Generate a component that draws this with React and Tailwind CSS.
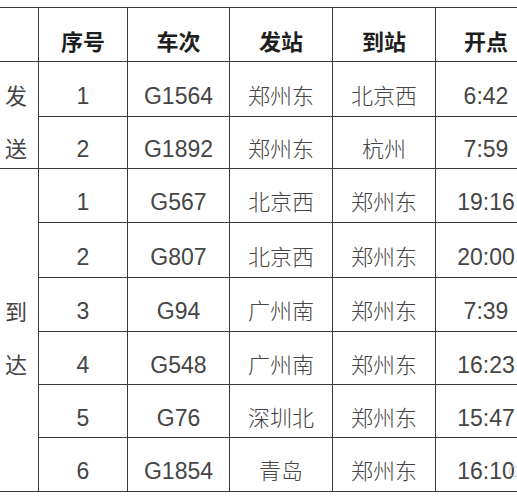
import React from "react";

const send = [
  ["1", "G1564", "郑州东", "北京西", "6:42"],
  ["2", "G1892", "郑州东", "杭州", "7:59"],
];

const arrive = [
  ["1", "G567", "北京西", "郑州东", "19:16"],
  ["2", "G807", "北京西", "郑州东", "20:00"],
  ["3", "G94", "广州南", "郑州东", "7:39"],
  ["4", "G548", "广州南", "郑州东", "16:23"],
  ["5", "G76", "深圳北", "郑州东", "15:47"],
  ["6", "G1854", "青岛", "郑州东", "16:10"],
];

const cn = { fontFamily: '"Noto Sans CJK SC", "Liberation Sans", sans-serif' };
const num = { fontFamily: '"Liberation Sans", Arial, "Noto Sans CJK SC", sans-serif' };

const Cell = ({ children, chinese }) => (
  <div
    className={`bg-white flex items-center justify-center text-[#454545] ${
      chinese ? "pt-[10px] text-[22px] font-light" : "pt-[14px] text-[23px]"
    }`}
    style={chinese ? cn : num}
  >
    {children}
  </div>
);

const SideChar = ({ h, children }) => (
  <div className={`${h} flex items-center justify-center pt-[10px] pr-[6px] text-[22px] text-[#444]`} style={cn}>
    {children}
  </div>
);

const Row = ({ r }) => (
  <>
    <Cell>{r[0]}</Cell>
    <Cell>{r[1]}</Cell>
    <Cell chinese>{r[2]}</Cell>
    <Cell chinese>{r[3]}</Cell>
    <Cell>{r[4]}</Cell>
  </>
);

export default function App() {
  return (
    <div className="relative w-[517px] h-[500px] overflow-hidden bg-white pt-[7px]">
      <div className="w-[535px] bg-[#3a3a3a] py-px">
        <div className="grid grid-cols-[38px_88px_101px_102px_102px_100px] grid-rows-[53px_54px_51px_53px_54px_53px_52px_52px_53px] gap-px">
          {/* header */}
          <div className="bg-white" />
          {["序号", "车次", "发站", "到站", "开点"].map((t) => (
            <div
              key={t}
              className="bg-white flex items-center justify-center pt-[11px] text-[22px] font-bold text-[#1e1e1e]"
              style={cn}
            >
              {t}
            </div>
          ))}

          {/* 发送 */}
          <div className="row-span-2 bg-white flex flex-col">
            <SideChar h="h-[55px]">发</SideChar>
            <SideChar h="h-[51px]">送</SideChar>
          </div>
          <Row r={send[0]} />
          <Row r={send[1]} />

          {/* 到达 */}
          <div className="row-span-6 bg-white flex flex-col">
            <SideChar h="h-[54px]">{""}</SideChar>
            <SideChar h="h-[55px]">{""}</SideChar>
            <SideChar h="h-[54px]">到</SideChar>
            <SideChar h="h-[53px]">达</SideChar>
            <SideChar h="h-[53px]">{""}</SideChar>
            <SideChar h="h-[53px]">{""}</SideChar>
          </div>
          {arrive.map((r, i) => (
            <Row key={i} r={r} />
          ))}
        </div>
      </div>

      {/* watermark */}
      <div className="absolute left-[509px] top-[466px] w-[11px] h-[11px] rounded-full border border-[#bbb]" />
    </div>
  );
}
